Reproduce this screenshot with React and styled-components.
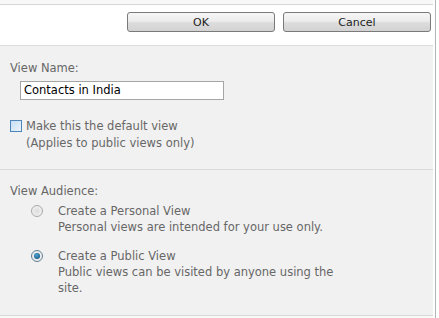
import React from 'react'
import styled, { createGlobalStyle } from 'styled-components';

const Global = createGlobalStyle`
		html, body {
				margin: 0;
				padding: 0;
				background: #ffffff;
		}
		body {
				font-family: 'DejaVu Sans', Verdana, sans-serif;
				font-size: 11.5px;
				color: #676767;
		}
`

const Frame = styled.div`
		display: flex;
		width: 439px;
		height: 318px;
		overflow: hidden;
		background: #ffffff;
`

const Main = styled.div`
		width: 433px;
		display: flex;
		flex-direction: column;
`

const Gutter = styled.div`
		width: 6px;
		display: flex;
		justify-content: flex-start;
		padding-left: 2px;
		box-sizing: border-box;
`

const GutterLine = styled.div`
		width: 1px;
		height: 100%;
		background: #b4b4b4;
`

const TopStrip = styled.div`
		height: 4px;
		background: #f7f7f7;
		border-bottom: 1px solid #d6d6d6;
`

const Toolbar = styled.div`
		display: flex;
		justify-content: flex-end;
		gap: 8px;
		padding: 7px 2px 13px 0;
		border-bottom: 1px solid #dcdcdc;
`

const Button = styled.button`
		width: 148px;
		height: 20px;
		border: 1px solid #7a7a7a;
		border-radius: 3px;
		background: linear-gradient(#f6f6f6 0%, #ececec 45%, #dcdcdc 55%, #d2d2d2 100%);
		font-family: 'DejaVu Sans', Verdana, sans-serif;
		font-size: 11px;
		color: #222;
		padding: 0;
`

const Section = styled.div`
		background: #f1f1f1;
		border-bottom: 1px solid #d8d8d8;
		padding: ${p => p.pad};
`

const Label = styled.div`
		line-height: 17px;
		margin-bottom: ${p => p.gap || 0}px;
`

const TextBox = styled.div`
		margin-left: 10px;
		width: 199px;
		height: 17px;
		border: 1px solid #a5a5a5;
		background: #ffffff;
		color: #000000;
		line-height: 17px;
		padding-left: 3px;
`

const CheckRow = styled.div`
		display: flex;
		gap: 4px;
		margin-top: 18px;
`

const CheckBox = styled.div`
		width: 10px;
		height: 10px;
		margin-top: 2px;
		border: 1px solid #4f86b9;
		background: linear-gradient(135deg, #c6def3, #eaf3fb);
		flex-shrink: 0;
`

const Lines = styled.div`
		line-height: 17px;
`

const Options = styled.div`
		display: flex;
		flex-direction: column;
		gap: 13px;
		padding-left: 21px;
`

const Option = styled.div`
		display: flex;
		gap: 15px;
`

const Radio = styled.div`
		width: 12px;
		height: 12px;
		border-radius: 50%;
		margin-top: 2px;
		flex-shrink: 0;
		box-sizing: border-box;
		border: 1px solid ${p => p.on ? '#5e7f96' : '#a9a9a9'};
		background: radial-gradient(circle, #dcdcdc 0%, #f7f7f7 100%);
		display: flex;
		align-items: center;
		justify-content: center;
`

const Dot = styled.div`
		width: 6px;
		height: 6px;
		border-radius: 50%;
		background: radial-gradient(circle at 40% 35%, #4fa3d6, #0c4b72);
`

const Desc = styled.div`
		line-height: 16px;
		width: 278px;
`

const Tail = styled.div`
		flex: 1;
		background: #f9f9f9;
`

export default () => {
	return (
		<Frame>
			<Global />
			<Main>
				<TopStrip />
				<Toolbar>
					<Button>OK</Button>
					<Button>Cancel</Button>
				</Toolbar>
				<Section pad="14px 10px 17px 10px">
					<Label gap={4}>View Name:</Label>
					<TextBox>Contacts in India</TextBox>
					<CheckRow>
						<CheckBox />
						<Lines>
							Make this the default view<br />
							(Applies to public views only)
						</Lines>
					</CheckRow>
				</Section>
				<Section pad="13px 10px 19px 10px">
					<Label gap={3}>View Audience:</Label>
					<Options>
						<Option>
							<Radio />
							<Desc>
								Create a Personal View<br />
								Personal views are intended for your use only.
							</Desc>
						</Option>
						<Option>
							<Radio on>
								<Dot />
							</Radio>
							<Desc>
								Create a Public View<br />
								Public views can be visited by anyone using the site.
							</Desc>
						</Option>
					</Options>
				</Section>
				<Tail />
			</Main>
			<Gutter>
				<GutterLine />
			</Gutter>
		</Frame>
	)
}
